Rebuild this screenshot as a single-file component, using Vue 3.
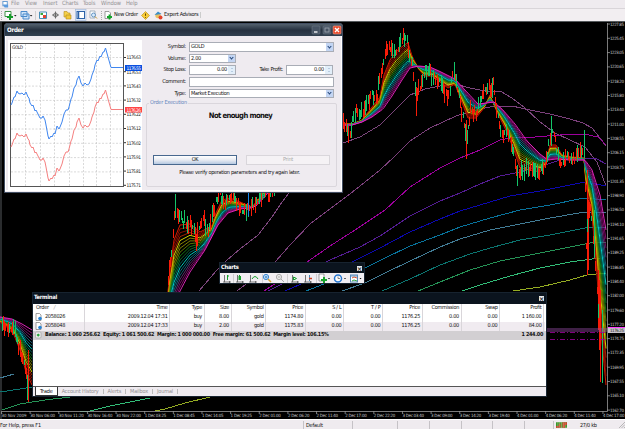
<template>
  <div class="desktop">
    <nav class="menu-bar">
      <svg class="menu-logo" viewBox="0 0 8 8">
        <rect x="1" y="0.5" width="5" height="5" fill="#fff" stroke="#5b93cc" />
        <path d="M1 4h6v3.5H3z" fill="#5b9ade" />
      </svg>
      <span v-for="item in menuItems" :key="item.name" :class="item.cls">{{ item.name }}</span>
    </nav>

    <div class="toolbar">
      <svg class="tools" viewBox="0 0 103 13">
        <path d="M1.5 2v9" stroke="#aaa" stroke-dasharray="1 1" />
        <path d="M5 2.5h6v5H5z" fill="#fff" stroke="#3c9445" />
        <path d="M7 8h6M10 5v6" stroke="#159a2a" stroke-width="2" />
        <path d="M14 6h2.6l-1.3 1.5zM29.8 6h2.6l-1.3 1.5z" fill="#222" />
        <path d="M21 2.5h6v5h-6zM23 5h6v5h-6z" fill="#cfe4fa" stroke="#4a8acb" />
        <path d="M35.5 2v9" stroke="#bbb" stroke-width=".6" />
        <path d="M39.5 3h7v6.5h-7z" fill="#fff" stroke="#478fb9" />
        <path d="M40.5 4h2.5v2h-2.5z" fill="#39a53d" />
        <path d="M43 6h3v3h-3z" fill="#e44331" />
        <path d="M55.5 2.5v7M52 6h7" stroke="#555" stroke-width=".8" />
        <circle cx="55.5" cy="6" r="2" fill="none" stroke="#555" stroke-width=".7" />
        <path d="M64 2.5h3l1 1.5h2v4h-6z" fill="#f5d04b" stroke="#b38a1b" stroke-width=".6" />
        <path d="M66 6h5v4h-5z" fill="#f3c83a" stroke="#b38a1b" stroke-width=".6" />
        <rect x="75.5" y=".5" width="10.5" height="11" fill="#dfe9f7" stroke="#9bb5d9" stroke-width=".6" />
        <rect x="77" y="2.5" width="7.5" height="7" fill="#fff" stroke="#2e62a8" />
        <path d="M78.5 3v6" stroke="#2e62a8" stroke-width="1.5" />
        <path d="M90 2h5v7h-5z" fill="#fff" stroke="#8899aa" stroke-width=".7" />
        <circle cx="93.5" cy="6" r="2" fill="#d8ecff" stroke="#4b80b4" stroke-width=".8" />
        <path d="M95 7.5l2 2" stroke="#c79a32" />
        <path d="M101.5 2v9" stroke="#aaa" stroke-dasharray="1 1" />
      </svg>
      <svg class="tool-icon" viewBox="0 0 9 9">
        <path d="M1 .5h4l1.5 1.5v5.5H1z" fill="#fff" stroke="#777" stroke-width=".7" />
        <path d="M3 6h5M5.5 3.5v5" stroke="#15a42a" stroke-width="1.8" />
      </svg>
      <span class="new-order">New Order</span>
      <svg class="tool-icon" viewBox="0 0 9 9">
        <path d="M4.5 .5l4 4-4 4-4-4z" fill="#f8cc39" stroke="#b98b10" stroke-width=".6" />
        <path d="M4.5 2.5v2.3M4.5 6v.8" stroke="#654b00" />
      </svg>
      <svg class="tool-icon expert-icon" viewBox="0 0 9 9">
        <circle cx="4" cy="4.5" r="2.7" fill="#e8c164" />
        <path d="M.5 4L4 .5 7.500 3z" fill="#398ecb" />
        <circle cx="6.5" cy="6.5" r="2" fill="#e4422b" />
      </svg>
      <span class="experts">Expert Advisors</span>
    </div>

    <svg class="chart" viewBox="0 21 625 398" width="625" height="398">
      <rect x="0" y="21" width="625" height="398" />
      <path d="M0 21.5H625M1 21V419" class="frame" />
      <polyline v-for="(line, i) in averages" :key="'a' + i" :points="line.pts" :stroke="line.color" class="average" />
      <g v-for="(set, s) in ribbons" :key="'r' + s">
        <polyline v-for="(line, i) in set" :key="i" :points="line.pts" :stroke="line.color" class="ribbon" />
      </g>
      <path :d="candles.down" class="down" />
      <path :d="candles.up" class="up" />
      <path d="M248.5 193v23" stroke="#1684e8" />
      <path d="M547 329H607M547 331H607" class="price-line" />
      <path d="M550 332.5H607M550 339.5H607" class="stop-line" />
      <path d="M607.5 23V411.5M2 411.5H607.5" class="axis" />
      <g v-for="(p, i) in prices" :key="p">
        <path :d="`M607 ${24 + i * 14.3}h3`" class="axis" />
        <text x="610" :y="25.5 + i * 14.3" textLength="14">{{ p }}</text>
      </g>
      <g v-for="(t, i) in times" :key="t">
        <path :d="`M${1.5 + i * 28.64} 411v3`" class="axis" />
        <text :x="1.5 + i * 28.64" y="417.3" :textLength="i < 5 ? 25 : 21.5">{{ t }}</text>
      </g>
      <rect x="608" y="327" width="17" height="6" fill="#c8c4cc" />
      <path d="M608 327.5h17" stroke="#ff40ff" />
      <text x="610" y="332" textLength="14" class="current">1176.25</text>
    </svg>

    <section class="order">
      <header class="order-title">
        <span>Order</span>
        <svg viewBox="0 0 31 10">
          <rect x="1" y="1" width="8" height="8" rx="1" fill="#465364" stroke="#76818f" stroke-width=".5" />
          <path d="M3 7h3.5" stroke="#fff" stroke-width="1.3" />
          <rect x="12" y="1" width="8" height="8" rx="1" fill="#465364" stroke="#76818f" stroke-width=".5" />
          <rect x="14" y="3" width="4" height="4" fill="none" stroke="#929ba5" />
          <rect x="22" y="1" width="8" height="8" rx="1" fill="#e94b2d" stroke="#f4a190" stroke-width=".6" />
          <path d="M24 3l4 4M28 3l-4 4" stroke="#fff" stroke-width="1.4" />
        </svg>
      </header>
      <div class="order-body">
        <svg class="tick-chart" viewBox="8 40 134 150">
          <rect x="8" y="40" width="134" height="150" fill="#fff" />
          <path :d="tickGrid" class="tick-grid" />
          <rect x="10.5" y="43.5" width="113" height="143" class="tick-frame" />
          <text x="12" y="49" textLength="11">GOLD</text>
          <polyline :points="toPoints(ticks)" stroke="#3f86ef" class="tick" />
          <polyline :points="toPoints(ticks, 42)" stroke="#f58080" class="tick" />
          <g v-for="(p, i) in tickPrices" :key="p">
            <path :d="`M124 ${57.5 + i * 14.2}h2`" stroke="#333" />
            <text x="126.5" :y="59.4 + i * 14.2" textLength="14.5">{{ p }}</text>
          </g>
          <rect x="125" y="65" width="17" height="6" fill="#0b50e0" />
          <text x="126.5" y="70" textLength="14.5" class="badge">1176.55</text>
          <rect x="125" y="107" width="17" height="5.5" fill="#ff4545" />
          <text x="126.5" y="111.5" textLength="14.5" class="badge">1176.26</text>
        </svg>
        <div class="order-form">
          <div class="field">
            <label>Symbol:</label>
            <div class="box wide">GOLD<i class="drop"></i></div>
          </div>
          <div class="field">
            <label>Volume:</label>
            <div class="box short">2.00<i class="drop"></i></div>
          </div>
          <div class="field">
            <label>Stop Loss:</label>
            <div class="box short num">0.00<i class="spin"></i></div>
            <label class="take">Take Profit:</label>
            <div class="box short num">0.00<i class="spin"></i></div>
          </div>
          <div class="field">
            <label>Comment:</label>
            <div class="box wide"></div>
          </div>
          <div class="field">
            <label>Type:</label>
            <div class="box wide">Market Execution<i class="drop"></i></div>
          </div>
          <fieldset class="execution">
            <legend>Order Execution</legend>
            <h1>Not enough money</h1>
            <div class="buttons">
              <button class="ok">OK</button>
              <button class="print" disabled>Print</button>
            </div>
            <p>Please verify operation parameters and try again later.</p>
          </fieldset>
        </div>
      </div>
    </section>

    <section class="charts-bar">
      <header class="dark-title">
        <span>Charts</span>
        <i class="close">×</i>
      </header>
      <svg class="charts-tools" viewBox="0 0 142 11" width="142" height="11">
        <g v-for="x in [3, 16, 29, 71, 84]" :key="x" :transform="`translate(${x} 1)`">
          <path d="M1.5 1v7H8M0 8h2M6.5 7v2" class="axes" />
        </g>
        <path d="M13.5 1v9M42.5 1v9M67.5 1v9M96.5 1v9" stroke="#bbb" stroke-width=".6" />
        <path d="M7.5 2v5M7 3h2M19.5 2v5M73.5 4l3 1.5-3 1.5zM32 6q3-5 6 0" class="green" />
        <rect x="18.5" y="3" width="2.5" height="4" fill="#19a22e" />
        <path d="M89.5 2v6" stroke="#4689bc" />
        <path d="M92 5.5h-3" stroke="#d04020" stroke-width="1.5" />
        <circle cx="46" cy="4" r="2.6" fill="#c7e6ff" stroke="#3684cf" />
        <path d="M48 6l3 3" stroke="#d6a434" stroke-width="1.5" />
        <path d="M44.8 4h2.6M46 2.8v2.6" stroke="#2268ad" stroke-width=".7" />
        <circle cx="59" cy="4" r="2.6" fill="#eee" stroke="#aaa" />
        <path d="M61 6l3 3M57.8 4h2.5" stroke="#aaa" />
        <path d="M99 1h5v7h-5z" fill="#fff" stroke="#777" stroke-width=".7" />
        <path d="M101 7h6M104 4v6" stroke="#18a42c" stroke-width="2" />
        <circle cx="118" cy="5.5" r="3.5" fill="#fff" stroke="#2676cf" stroke-width="1.5" />
        <path d="M118 3.5v2h2" fill="none" stroke="#555" stroke-width=".7" />
        <rect x="130.5" y="2" width="7" height="7" fill="#fff" stroke="#5588b9" />
        <path d="M130.5 3h7" stroke="#5588b9" />
        <path d="M132 5l2-1 3 1" fill="none" stroke="#d55434" />
        <path d="M132 8l2-1 3 1" fill="none" stroke="#32a442" />
        <path d="M108 5h2l-1 1.3zM124 5h2l-1 1.3zM139.5 5h2l-1 1.3z" />
      </svg>
    </section>

    <section class="terminal">
      <header class="dark-title">
        <span>Terminal</span>
        <i class="close">×</i>
      </header>
      <div class="term-body">
        <div class="trow thead">
          <span v-for="(c, i) in columns" :key="i">{{ c }}<em v-if="i === 0">/</em></span>
        </div>
        <div v-for="row in orders" :key="row[0]" class="trow">
          <span v-for="(cell, i) in row" :key="i">
            <svg v-if="i === 0" class="doc" viewBox="0 0 7 8">
              <path d="M1 .5h3.5L6 2v5.5H1z" fill="#fff" stroke="#777" stroke-width=".7" />
              <circle cx="5" cy="5.5" r="1.8" fill="#2784d5" />
            </svg>{{ cell }}
          </span>
        </div>
        <div class="balance">
          <svg class="doc" viewBox="0 0 7 8">
            <rect x=".5" y="1" width="5.5" height="6" rx="1" fill="#eee" stroke="#999" stroke-width=".6" />
            <path d="M3.2 2.5L5 4 3.2 5.7 1.5 4z" fill="#26a53a" />
          </svg>
          <span class="sum">Balance: 1 060 256.62&nbsp; Equity: 1 061 500.62&nbsp; Margin: 1 000 000.00&nbsp; Free margin: 61 500.62&nbsp; Margin level: 106.15%</span>
          <span class="total">1 244.00</span>
        </div>
        <div class="blank"></div>
        <div class="tabs">
          <b>Trade</b>
          <span>Account History</span>
          <span>Alerts</span>
          <span>Mailbox</span>
          <span>Journal</span>
        </div>
      </div>
    </section>

    <footer class="status">
      <span class="help">For Help, press F1</span>
      <span class="profile">Default</span>
      <span class="cell wide-cell"></span>
      <span v-for="n in 4" :key="n" class="cell"></span>
      <span class="cell last-cell"></span>
      <span class="traffic">
        <svg viewBox="0 0 12 6">
          <rect width="12" height="6" fill="#3b982f" />
          <path d="M0 4h3V2h2v4H0zM7 0h5v3h-2v3H7z" fill="#c6432d" />
          <path d="M2 0v6M4 0v6M6 0v6M8 0v6M10 0v6" stroke="#e7d7a1" stroke-width=".4" />
        </svg>
        <em>27/0 kb</em>
        <svg class="grip" viewBox="0 0 6 6">
          <path d="M0 6L6 0M2.5 6L6 2.5M5 6L6 5" stroke="#aaa" stroke-width=".8" />
        </svg>
      </span>
    </footer>
  </div>
</template>

<script setup>
const menuItems = [
  { name: 'File', cls: 'm1' },
  { name: 'View', cls: 'm2' },
  { name: 'Insert', cls: 'm3' },
  { name: 'Charts', cls: 'm4' },
  { name: 'Tools', cls: 'm5' },
  { name: 'Window', cls: 'm6' },
  { name: 'Help', cls: 'm7' },
];

const prices = [
  '1227.85', '1225.45', '1223.05', '1220.65', '1218.20', '1215.80', '1213.40',
  '1211.00', '1208.55', '1206.15', '1203.75', '1201.35', '1198.90', '1196.50',
  '1194.10', '1191.65', '1189.25', '1186.85', '1184.40', '1182.00', '1179.60',
  '1177.20', '1174.75', '1172.35', '1169.95', '1167.55', '1165.10', '1162.70',
];
const times = [
  '30 Nov 2009', '30 Nov 06:00', '30 Nov 11:20', '30 Nov 16:40', '30 Nov 22:00',
  '1 Dec 03:25', '1 Dec 08:45', '1 Dec 14:05', '1 Dec 19:25', '2 Dec 01:00',
  '2 Dec 06:20', '2 Dec 11:40', '2 Dec 17:00', '2 Dec 22:20', '3 Dec 03:40',
  '3 Dec 09:00', '3 Dec 14:20', '3 Dec 19:40', '4 Dec 01:00', '4 Dec 06:20',
  '4 Dec 11:40', '4 Dec 17:00',
];
const tickPrices = [
  '1176.63', '1176.53', '1176.43', '1176.32', '1176.22',
  '1176.12', '1176.02', '1175.91', '1175.81', '1175.71',
];

const columns = ['Order', 'Time', 'Type', 'Size', 'Symbol', 'Price', 'S / L', 'T / P', 'Price', 'Commission', 'Swap', 'Profit'];
const orders = [
  ['2058026', '2009.12.04 17:31', 'buy', '8.00', 'gold', '1174.80', '0.00', '0.00', '1176.25', '0.00', '0.00', '1 160.00'],
  ['2058048', '2009.12.04 17:33', 'buy', '2.00', 'gold', '1175.83', '0.00', '0.00', '1176.25', '0.00', '0.00', '84.00'],
];

// "x,y x,y" strings are easier to edit than nested arrays
const parse = (s) => s.split(' ').map((p) => p.split(',').map(Number));
const toPoints = (pts, dy = 0) => pts.map(([x, y]) => `${x},${y + dy}`).join(' ');

const ticks = parse('11,105 12,103 14,97 15,97 17,91 18,93 20,94 22,93 24,95 26,92 28,97 29,98 30,103 32,106 33,105 35,111 36,110 38,114 40,118 42,118 43,116 45,120 46,125 48,136 49,139 51,136 52,137 54,133 55,134 57,126 59,129 60,127 62,122 64,114 66,110 68,110 69,107 71,99 72,97 74,88 76,85 77,80 79,76 81,83 83,86 85,83 87,85 89,84 91,79 92,75 94,70 95,65 97,60 98,61 100,56 101,57 103,52 104,52 105.5,48 108,57 111,67.5 123,67.5');
const tickGrid =
  [25, 40, 54, 69, 83, 96, 110].map((x) => `M${x + 0.5} 44V186`).join('') +
  Array.from({ length: 9 }, (_, i) => `M11 ${57.5 + i * 14.3}H123`).join('');

const averages = [
  ['#7c467c', '199,291 217,270 227,260 240,249 258,235 272,217 280,205 289,193 343,143 360,137 380,125 395,110 410,95 425,89 440,86 455,84 470,88 485,91 500,91 512,98 525,108 540,122 555,133 570,140 585,147 597,162 606,186'],
  ['#7c407c', '237,291 276,261 290,245 310,224 330,209 355,190 380,170 395,156 410,141 430,128 456,116 480,109 495,106 512,106 530,110 550,114 570,119 583,123 592,128 600,138 606,146'],
  ['#9c009c', '264,291 307,262 330,246 355,230 385,210 410,187 440,168 460,158 480,150 500,140 515,137 535,137 560,135 584,134 598,137 606,145'],
  ['#541c94', '268,291 330,260 360,247 380,236 410,216 440,201 460,193 480,184 500,176 520,172 545,165 560,160 585,158 597,159 606,164'],
  ['#0c08b0', '285,291 352,262 380,248 410,232 440,219 460,211 480,205 510,196 540,191 560,187 585,182 606,186'],
  ['#08739c', '306,291 365,268 385,258 410,246 440,235 460,227 490,218 520,210 550,205 584,198 606,200'],
  ['#427c96', '342,291 365,283 385,273 410,261 440,247 460,239 490,230 520,224 550,218 585,212 606,213'],
  ['#0b7570', '382,291 410,279 440,265 470,254 490,248 520,240 550,235 590,227 606,228'],
  ['#259356', '418,291 440,282 470,270 500,261 530,255 560,249 590,243 606,242'],
  ['#32bd78', '462,291 480,285 510,276 540,268 570,262 600,258'],
  ['#95ad22', '513,291 540,287 570,280 587,275 606,273'],
  ['#427c96', '0,378 14,374'],
  ['#0b7570', '0,392 33,387'],
  ['#259356', '2,410 20,404 45,400 70,397'],
  ['#32bd78', '80,411 90,411 110,406 150,398'],
  ['#95ad22', '155,411 165,409 185,403 210,397'],
].map(([color, s]) => ({ color, pts: s }));

const rainbow = [
  '#ff1c00', '#a01000', '#9c1000', '#c02c00', '#f8f400', '#9c9600', '#959800', '#6c8c00',
  '#158a18', '#107c31', '#007b68', '#00f0e4', '#0a8094', '#1a6a86', '#633a82', '#850e72', '#9a0a7c', '#ff2cd4',
];

const at = (pts, x) => {
  for (let i = 1; i < pts.length; i++) {
    const [x0, y0] = pts[i - 1];
    const [x1, y1] = pts[i];
    if (x <= x1) return y0 + ((y1 - y0) * (x - x0)) / (x1 - x0);
  }
  return pts[pts.length - 1][1];
};

const ribbon = (fast, slow) => {
  const a = parse(fast);
  const b = parse(slow);
  return rainbow.map((color, i) => {
    const k = i / (rainbow.length - 1);
    const pts = [];
    for (let x = a[0][0]; x <= a[a.length - 1][0]; x += 2) {
      pts.push(`${x},${(at(a, x) * (1 - k) + at(b, x) * k).toFixed(1)}`);
    }
    return { color, pts: pts.join(' ') };
  });
};

const ribbons = [
  ribbon(
    '168,292 170,270 174,240 180,225 190,224 200,232 212,226 215,215 222,200 230,198 240,202 252,207 262,195 290,150 343,124 352,124 362,120 372,107 380,97 384,75 390,60 396,52 404,45 408,43 412,56 418,68 424,76 432,76 440,82 448,88 455,84 461,100 468,118 476,118 484,108 490,95 497,112 505,128 514,150 520,168 530,170 540,172 546,165 550,145 556,145 562,155 572,157 584,158 586,185 592,215 596,260 600,320 606,385',
    '168,320 180,291 190,272 205,250 218,225 228,213 240,209 250,208 256,206 267,194 343,125 352,125 362,122 372,117 383,109 392,96 402,80 410,68 419,66 430,67 441,72 455,79 465,90 478,104 494,102 503,110 515,124 527,141 540,154 548,160 556,159 570,160 585,160 592,170 600,195 606,230',
  ),
  ribbon('0,322 8,328 14,335 20,350 26,372 32,385', '0,317 12,319 22,324 32,330'),
];

const price = [
  parse('168,285 170,265 172,255 174,225 175,200 178,218 182,220 188,222 194,224 196,240 200,230 204,216 208,232 214,210 218,195 225,204 230,196 236,200 242,210 250,208 258,200 343,124 347,130 350,134 353,120 356,112 359,118 365,108 368,98 372,97 377,98 379,82 384,64 387,48 390,46 395,52 400,42 404,37 408,42 410,58 413,66 416,98 420,88 424,72 430,70 433,78 440,80 446,96 450,90 454,70 457,84 462,112 465,128 467,138 471,110 476,114 482,98 484,88 490,88 493,85 498,115 503,140 506,128 512,142 517,174 525,168 535,172 545,168 550,140 551,125 557,150 560,165 566,158 575,158 584,150 585,165 586,250 590,205 594,245 597,290 601,350 602,378'),
  parse('2,325 8,330 14,330 20,350 26,370 28,385'),
];

const candles = (() => {
  let seed = 11;
  const rnd = () => {
    seed = (seed * 16807) % 2147483647;
    return seed / 2147483647;
  };
  let up = '';
  let down = '';
  price.forEach((pts) => {
    for (let x = pts[0][0]; x < pts[pts.length - 1][0]; x += 1.3) {
      const y = at(pts, x) + (rnd() - 0.5) * 9;
      const h = 4 + rnd() * 13;
      const bar = `M${Math.floor(x) + 0.5} ${(y - h / 2).toFixed(1)}v${h.toFixed(1)}`;
      if (rnd() > 0.6) up += bar;
      else down += bar;
    }
  });
  // long wicks
  up += 'M175.5 194v24M551.5 116v30M584.5 130v28M404.5 33v14M454.5 80v-18M492.5 78v20M517.5 165v21M602.5 310v73M27.5 375v25M594.5 210v48';
  down += 'M416.5 90v26M466.5 120v39M587.5 170v105M588.5 200v70M197.5 222v24M28.5 350v52M600.5 290v92M598.5 270v60M599.5 280v70';
  return { up, down };
})();
</script>

<style>
body {
  margin: 0;
  overflow: hidden;
}
</style>

<style scoped>
.desktop {
  position: relative;
  width: 625px;
  height: 429px;
  display: flex;
  flex-direction: column;
  overflow: hidden;
  background: #000;
  color: #111;
  font: 5.5px/1 "DejaVu Sans Condensed", "DejaVu Sans", sans-serif;
  letter-spacing: -0.28px;
  white-space: nowrap;
}

.menu-bar {
  display: flex;
  align-items: center;
  height: 9px;
  background: #efebef;
  color: #929092;
  font-size: 5.8px;
  letter-spacing: -0.1px;
  border-bottom: 1px solid #d9d5d9;
  box-sizing: border-box;
}
.menu-logo {
  width: 7px;
  height: 7px;
  margin: 0 2px;
}
.m1 { width: 14px; }
.m2 { width: 18px; }
.m3 { width: 19px; }
.m4 { width: 21px; }
.m5 { width: 18px; }
.m6 { width: 25px; }

.toolbar {
  display: flex;
  align-items: center;
  height: 12px;
  background: #f2eef1;
}
.tools {
  width: 103px;
  height: 13px;
}
.tool-icon {
  width: 9px;
  height: 9px;
  margin-left: 1px;
}
.new-order {
  width: 26px;
  margin-left: 1px;
  letter-spacing: -0.3px;
}
.expert-icon {
  margin-left: 4px;
}
.experts {
  margin-left: 1px;
  letter-spacing: -0.3px;
  padding-right: 2px;
  border-right: 1px solid #ccc;
}

.chart {
  display: block;
  letter-spacing: 0;
}
.chart text {
  fill: #c8c8c8;
  font-size: 4.4px;
}
.chart text.current {
  fill: #222;
}
.frame {
  stroke: #55595c;
  stroke-width: 1;
  fill: none;
}
.average,
.ribbon {
  fill: none;
  stroke-width: 1;
}
.average {
  shape-rendering: crispEdges;
}
.ribbon {
  stroke-width: 0.85;
}
.up,
.down {
  fill: none;
  stroke: #14c468;
  stroke-width: 1;
  shape-rendering: crispEdges;
}
.down {
  stroke: #f81c08;
}
.price-line {
  stroke: #a050b0;
  stroke-width: 0.8;
}
.stop-line {
  stroke: #a000a0;
  stroke-width: 0.8;
  stroke-dasharray: 5 2 1 2;
}
.axis {
  stroke: #999;
  stroke-width: 0.8;
  fill: none;
}

.order {
  position: absolute;
  left: 4px;
  top: 23px;
  width: 339px;
  height: 170px;
  box-sizing: border-box;
  border: 1px solid #424e62;
  border-radius: 3px 3px 0 0;
  background: #efebf0;
}
.order-title {
  display: flex;
  align-items: center;
  justify-content: space-between;
  height: 12px;
  padding-left: 2px;
  background: linear-gradient(#53606d, #25303f 50%, #314050);
  color: #fff;
  font-size: 6.2px;
  font-weight: bold;
}
.order-title svg {
  width: 31px;
  height: 10px;
}
.order-body {
  display: flex;
  height: 155px;
  border: solid #fff;
  border-width: 0 1px 1px;
  padding-top: 4px;
  box-sizing: border-box;
}
.tick-chart {
  width: 134px;
  height: 150px;
  margin-left: 2px;
  letter-spacing: 0;
}
.tick-chart text {
  font-size: 4.7px;
  fill: #222;
}
.tick-chart text.badge {
  fill: #fff;
}
.tick-grid {
  stroke: #c9c9c9;
  stroke-width: 0.7;
  stroke-dasharray: 2 1.5;
}
.tick-frame {
  fill: none;
  stroke: #555;
}
.tick {
  fill: none;
  stroke-width: 1;
}
.order-form {
  flex: 1;
  padding-top: 1px;
}
.field {
  display: flex;
  align-items: center;
  height: 11.7px;
}
.field label {
  width: 44px;
  margin-right: 3px;
  text-align: right;
}
.box {
  display: flex;
  align-items: center;
  justify-content: space-between;
  height: 9.5px;
  box-sizing: border-box;
  padding-left: 1px;
  background: #fff;
  border: 1px solid #a9adb6;
}
.wide {
  width: 145px;
}
.short {
  width: 47px;
}
.num {
  padding-left: 27px;
}
.field .take {
  width: 47px;
}
.drop,
.spin {
  position: relative;
  width: 7px;
  height: 7.5px;
  background: #c3d5f3;
}
.drop::after {
  content: "";
  position: absolute;
  left: 2px;
  top: 1.5px;
  width: 2px;
  height: 2px;
  border: solid #234579;
  border-width: 0 1px 1px 0;
  transform: rotate(45deg);
}
.spin {
  background: #e2eef9;
}
.spin::before,
.spin::after {
  content: "";
  position: absolute;
  left: 2.5px;
  top: 1.5px;
  border: solid transparent;
  border-width: 0 1.2px 1.8px;
  border-bottom-color: #8eaac9;
}
.spin::after {
  top: 4.5px;
  transform: rotate(180deg);
}
.execution {
  margin: 1px 0 0 4px;
  padding: 0;
  width: 191px;
  height: 87px;
  box-sizing: border-box;
  border: 1px solid #dad6dc;
  border-radius: 2px;
  text-align: center;
}
.execution legend {
  margin: 0 auto 0 2px;
  padding: 0 1px;
  color: #6385bc;
  letter-spacing: -0.2px;
}
.execution h1 {
  margin: 4px 2px 0 0;
  font-size: 7.6px;
  line-height: 12px;
  font-weight: bold;
  letter-spacing: -0.6px;
}
.buttons {
  display: flex;
  justify-content: space-between;
  margin: 33px 6px 0;
}
.buttons button {
  width: 84px;
  height: 10px;
  padding: 0;
  font: inherit;
  letter-spacing: inherit;
  border: 1px solid #48688f;
  background: linear-gradient(#fff, #e8ebf2 50%, #b5c8e1);
  color: #111;
}
.buttons .print {
  border-color: #d9d6db;
  background: #f5f2f5;
  color: #aaa;
}
.execution p {
  margin: 5px 4px 0 0;
}

.dark-title {
  display: flex;
  align-items: center;
  justify-content: space-between;
  height: 10px;
  padding: 0 2px 0 1px;
  background: #0b141e;
  color: #fff;
  font-size: 5.8px;
  font-weight: bold;
}
.close {
  width: 5px;
  height: 5px;
  background: #e6e8ea;
  color: #111;
  font: bold 6px/5px "DejaVu Sans", sans-serif;
  letter-spacing: 0;
  text-align: center;
}

.charts-bar {
  position: absolute;
  left: 219px;
  top: 262px;
  width: 146px;
  height: 22px;
  box-sizing: border-box;
  border: 1px solid #17232f;
  background: #f1eef2;
}
.charts-tools {
  display: block;
}
.axes {
  fill: none;
  stroke: #555;
  stroke-width: 0.8;
}
.green {
  fill: none;
  stroke: #16a02c;
}

.terminal {
  position: absolute;
  left: 32px;
  top: 292px;
  width: 515px;
  height: 105px;
  box-sizing: border-box;
  border: 1px solid #17232f;
  background: #fff;
}
.terminal .dark-title {
  height: 10.5px;
}
.term-body {
  display: flex;
  flex-direction: column;
  height: 92.5px;
}
.trow {
  display: grid;
  grid-template-columns: 51.5px 85.5px 34.5px 27px 34.5px 39.5px 38.5px 39px 39.5px 39px 38.5px 44px;
  height: 9px;
  margin-right: 1px;
}
.trow:nth-child(3) {
  background: #f0ebf0;
}
.trow > span {
  display: flex;
  align-items: center;
  justify-content: flex-end;
  padding-right: 1.5px;
  border-right: 0.5px solid #d9d6da;
}
.trow > span:first-child {
  justify-content: flex-start;
}
.thead > span:first-child {
  padding-left: 3px;
}
.thead em {
  margin-left: 5px;
  color: #999;
  letter-spacing: 0;
}
.doc {
  width: 7px;
  height: 8px;
  margin: 0 3px 0 2px;
}
.balance {
  display: flex;
  align-items: center;
  height: 9px;
  background: #d2cfd2;
  font-size: 5.4px;
  font-weight: bold;
  letter-spacing: -0.27px;
}
.total {
  margin-left: auto;
  padding-right: 3px;
}
.blank {
  flex: 1;
}
.tabs {
  display: flex;
  align-items: center;
  height: 9px;
  background: #efebf0;
  border-top: 1px solid #555;
  color: #929092;
  letter-spacing: -0.15px;
}
.tabs b {
  height: 8px;
  line-height: 8px;
  margin: -1px 0 0 2px;
  padding: 0 4px;
  background: #fff;
  border: 1px solid #333;
  border-top: 0;
  color: #111;
  font-weight: normal;
}
.tabs span {
  padding: 0 4px;
  height: 5px;
  line-height: 5px;
  border-right: 1px solid #bbb;
}

.status {
  display: flex;
  align-items: center;
  flex: 1;
  background: #efebef;
  border-top: 1px solid #fff;
}
.status > span {
  box-sizing: border-box;
  border-right: 1px solid #c5c2c6;
  height: 8px;
  line-height: 8px;
}
.status .help {
  width: 304px;
  letter-spacing: -0.2px;
}
.status .profile {
  width: 49px;
  padding-left: 2px;
  letter-spacing: -0.2px;
}
.status .cell {
  width: 31.75px;
}
.status .wide-cell {
  width: 45px;
}
.status .last-cell {
  width: 29px;
}
.status .traffic {
  display: flex;
  align-items: center;
  flex: 1;
  gap: 13px;
  padding-left: 2px;
  border: 0;
}
.traffic em {
  font-style: normal;
}
.traffic svg {
  width: 11px;
  height: 6px;
}
.traffic .grip {
  width: 6px;
  margin-left: auto;
}
</style>
